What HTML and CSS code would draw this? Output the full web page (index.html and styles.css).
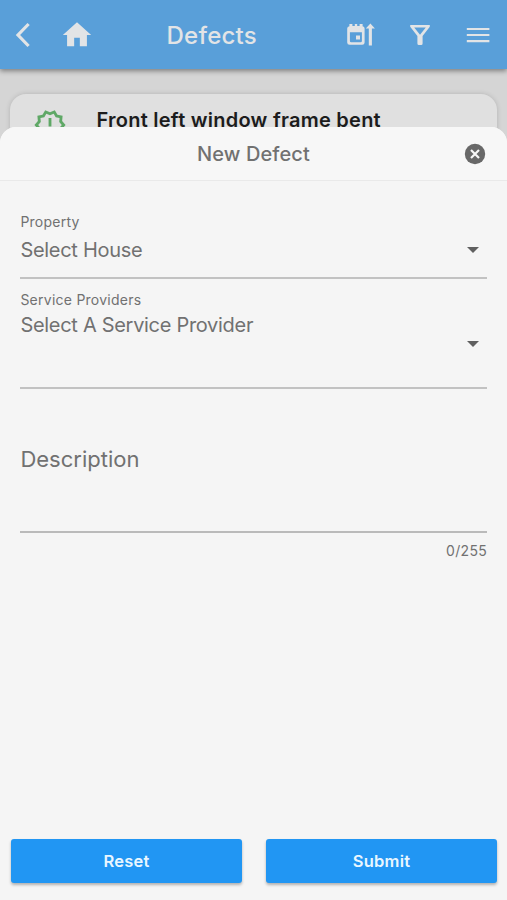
FILE: index.html
```html
<!DOCTYPE html>
<html lang="en">
<head>
<meta charset="utf-8">
<title>Defects</title>
<link rel="stylesheet" href="styles.css">
</head>
<body>
<header class="appbar">
  <svg class="icon-back" viewBox="0 0 16 26"><path d="M13.600 2 3 13 13.600 24" fill="none" stroke="currentColor" stroke-width="3.200"/></svg>
  <svg class="icon-home" viewBox="0 0 24 24"><path d="M10 20v-6h4v6h5v-8h3L12 3 2 12h3v8z" fill="currentColor"/></svg>
  <h1 class="appbar-title">Defects</h1>
  <svg class="icon-sort" viewBox="0 0 30 24"><path fill="currentColor" fill-rule="evenodd" d="M3.400 1h3v2h2.400V1h2.400v2h2.400V1h3v2.200Q18.600 3.500 18.600 5.400v14Q18.600 21.800 16.200 21.800H3.600Q1.200 21.800 1.200 19.400v-14Q1.200 3.500 3.400 3.200zM3.900 9.200v8.900q0 1.200 1.200 1.200h9.600q1.200 0 1.200-1.200V9.200zM10 12.600h4v3.900h-4zM24.400 .4l4.500 5h-3v17.200h-3.100V5.400h-3z"/></svg>
  <svg class="icon-filter" viewBox="0 0 22 22"><path fill="currentColor" fill-rule="evenodd" d="M1.200 1h19.600v1.800L13.600 12v7.500q0 1.500-1.500 1.500h-2.200q-1.500 0-1.500-1.500V12L1.200 2.800zM5.200 3.500l5.800 7.200 5.800-7.200z"/></svg>
  <svg class="icon-menu" viewBox="0 0 24 16"><path d="M.8 2h22.600M.8 8h22.600M.8 14.200h22.600" stroke="currentColor" stroke-width="2.200"/></svg>
</header>
<main class="page">
  <article class="card">
    <svg class="icon-status" viewBox="0 0 24 24"><path fill="currentColor" d="m23 12-2.440-2.780.34-3.680-3.610-.82-1.890-3.180L12 3 8.600 1.540 6.710 4.720l-3.610.81.34 3.680L1 12l2.440 2.780-.34 3.690 3.610.82 1.890 3.180L12 21l3.400 1.460 1.890-3.180 3.610-.82-.34-3.680L23 12zm-4.510 2.110.26 2.790-2.740.62-1.430 2.410L12 18.820l-2.580 1.110-1.430-2.410-2.740-.62.26-2.800L3.660 12l1.850-2.120-.26-2.780 2.740-.61 1.430-2.410L12 5.180l2.580-1.110 1.430 2.410 2.740.62-.26 2.790L20.340 12l-1.850 2.110zM11 15h2v2h-2zm0-8h2v6h-2z"/></svg>
    <h2 class="card-title">Front left window frame bent</h2>
  </article>
</main>
<section class="sheet">
  <div class="sheet-head">
    <h2 class="sheet-title">New Defect</h2>
    <svg class="icon-close" viewBox="0 0 22 22"><circle cx="11" cy="11" r="10.200" fill="currentColor"/><path d="m7 7 8 8m0-8-8 8" stroke="#f7f7f7" stroke-width="2.200"/></svg>
  </div>
  <form class="form">
    <div class="field property">
      <span class="label">Property</span>
      <span class="value">Select House</span>
      <svg class="caret" viewBox="0 0 12 6"><path d="M0 0h12L6 6z" fill="currentColor"/></svg>
    </div>
    <div class="field provider">
      <span class="label">Service Providers</span>
      <span class="value">Select A Service Provider</span>
      <svg class="caret" viewBox="0 0 12 6"><path d="M0 0h12L6 6z" fill="currentColor"/></svg>
    </div>
    <div class="field description">
      <span class="placeholder">Description</span>
    </div>
    <span class="counter">0/255</span>
  </form>
  <footer class="actions">
    <button class="button reset" type="button">Reset</button>
    <button class="button submit" type="button">Submit</button>
  </footer>
</section>
</body>
</html>
```
FILE: styles.css
```css
* { box-sizing: border-box; }
body {
  margin: 0;
  height: 900px;
  overflow: hidden;
  position: relative;
  background: #d5d5d5;
  font-family: Inter, "Liberation Sans", sans-serif;
  color: #717171;
}
h1, h2 { margin: 0; }
svg { display: block; flex: none; }

.appbar {
  position: relative;
  display: flex;
  align-items: center;
  height: 69px;
  padding: 1px 17.500px 0 15px;
  background: #599fd9;
  color: #e2e4e6;
  box-shadow: 0 2px 5px rgba(0, 0, 0, .42);
}
.icon-back { width: 16px; height: 26px; }
.icon-home { width: 34px; height: 34px; margin-left: 28.500px; }
.appbar-title {
  flex: 1;
  padding: 1px 0 0 73px;
  font-size: 24px;
  font-weight: 500;
  line-height: 30px;
  letter-spacing: .25px;
  white-space: nowrap;
}
.icon-sort { width: 30px; height: 24px; }
.icon-filter { width: 22px; height: 22px; margin-left: 33px; }
.icon-menu { width: 24px; height: 16px; margin-left: 35px; }

.page { padding: 25px 10px 0; }
.card {
  display: flex;
  height: 90px;
  padding: 14px 22px;
  border-radius: 16px;
  background: #e0e0e0;
  box-shadow: 0 0 5px rgba(0, 0, 0, .16);
}
.icon-status { width: 34px; height: 34px; margin-left: 1px; color: #5fa866; }
.card-title {
  margin: -1px 0 0 29.500px;
  color: #1c1c1c;
  font-size: 20px;
  font-weight: 600;
  line-height: 26px;
  letter-spacing: .25px;
  white-space: nowrap;
}

.sheet {
  position: absolute;
  inset: 127px 0 0;
  display: flex;
  flex-direction: column;
  border-radius: 16px 16px 0 0;
  background: #f5f5f5;
  overflow: hidden;
}
.sheet-head {
  display: grid;
  grid-template-columns: 1fr auto 1fr;
  align-items: center;
  height: 54px;
  padding: 1px 21px 0;
  background: #f7f7f7;
  border-bottom: 1px solid #e9e9e9;
}
.sheet-title {
  grid-column: 2;
  font-size: 20px;
  font-weight: 500;
  line-height: 26px;
  letter-spacing: .1px;
}
.icon-close { width: 22px; height: 22px; justify-self: end; color: #686868; }

.form { display: flex; flex-direction: column; flex: 1; padding: 31px 20px 0 20.400px; }
.field { display: grid; grid-template-columns: 1fr auto; border-bottom: 2px solid #c2c2c2; }
.label { grid-column: 1; font-size: 14px; line-height: 20px; letter-spacing: .25px; }
.value { grid-column: 1; font-size: 20px; line-height: 26px; letter-spacing: -.3px; }
.caret { width: 12px; height: 6px; margin-right: 8px; color: #606060; }
.property { height: 67px; grid-template-rows: 20px 1fr; }
.property .value { margin-top: 5px; }
.property .caret { margin-top: 15px; }
.provider { height: 110px; padding-top: 11px; grid-template-rows: 20px 1fr; }
.provider .value { margin-top: 2px; }
.provider .caret { margin-top: 31px; }
.description { height: 144px; padding-top: 55px; border-color: #bababa; }
.placeholder { font-size: 22px; line-height: 30px; letter-spacing: 0; }
.counter { align-self: flex-end; margin-top: 8px; font-size: 14px; line-height: 20px; letter-spacing: .3px; }

.actions { display: grid; grid-template-columns: 1fr 1fr; gap: 24px; padding: 0 10px 17px 11px; }
.button {
  height: 44px;
  padding: 0;
  border: 0;
  border-radius: 3px;
  background: #2196f3;
  color: #e9f6ff;
  font: 600 16.500px/44px Inter, "Liberation Sans", sans-serif;
  letter-spacing: .25px;
  box-shadow: 0 2px 3px rgba(0, 0, 0, .28);
}
```
